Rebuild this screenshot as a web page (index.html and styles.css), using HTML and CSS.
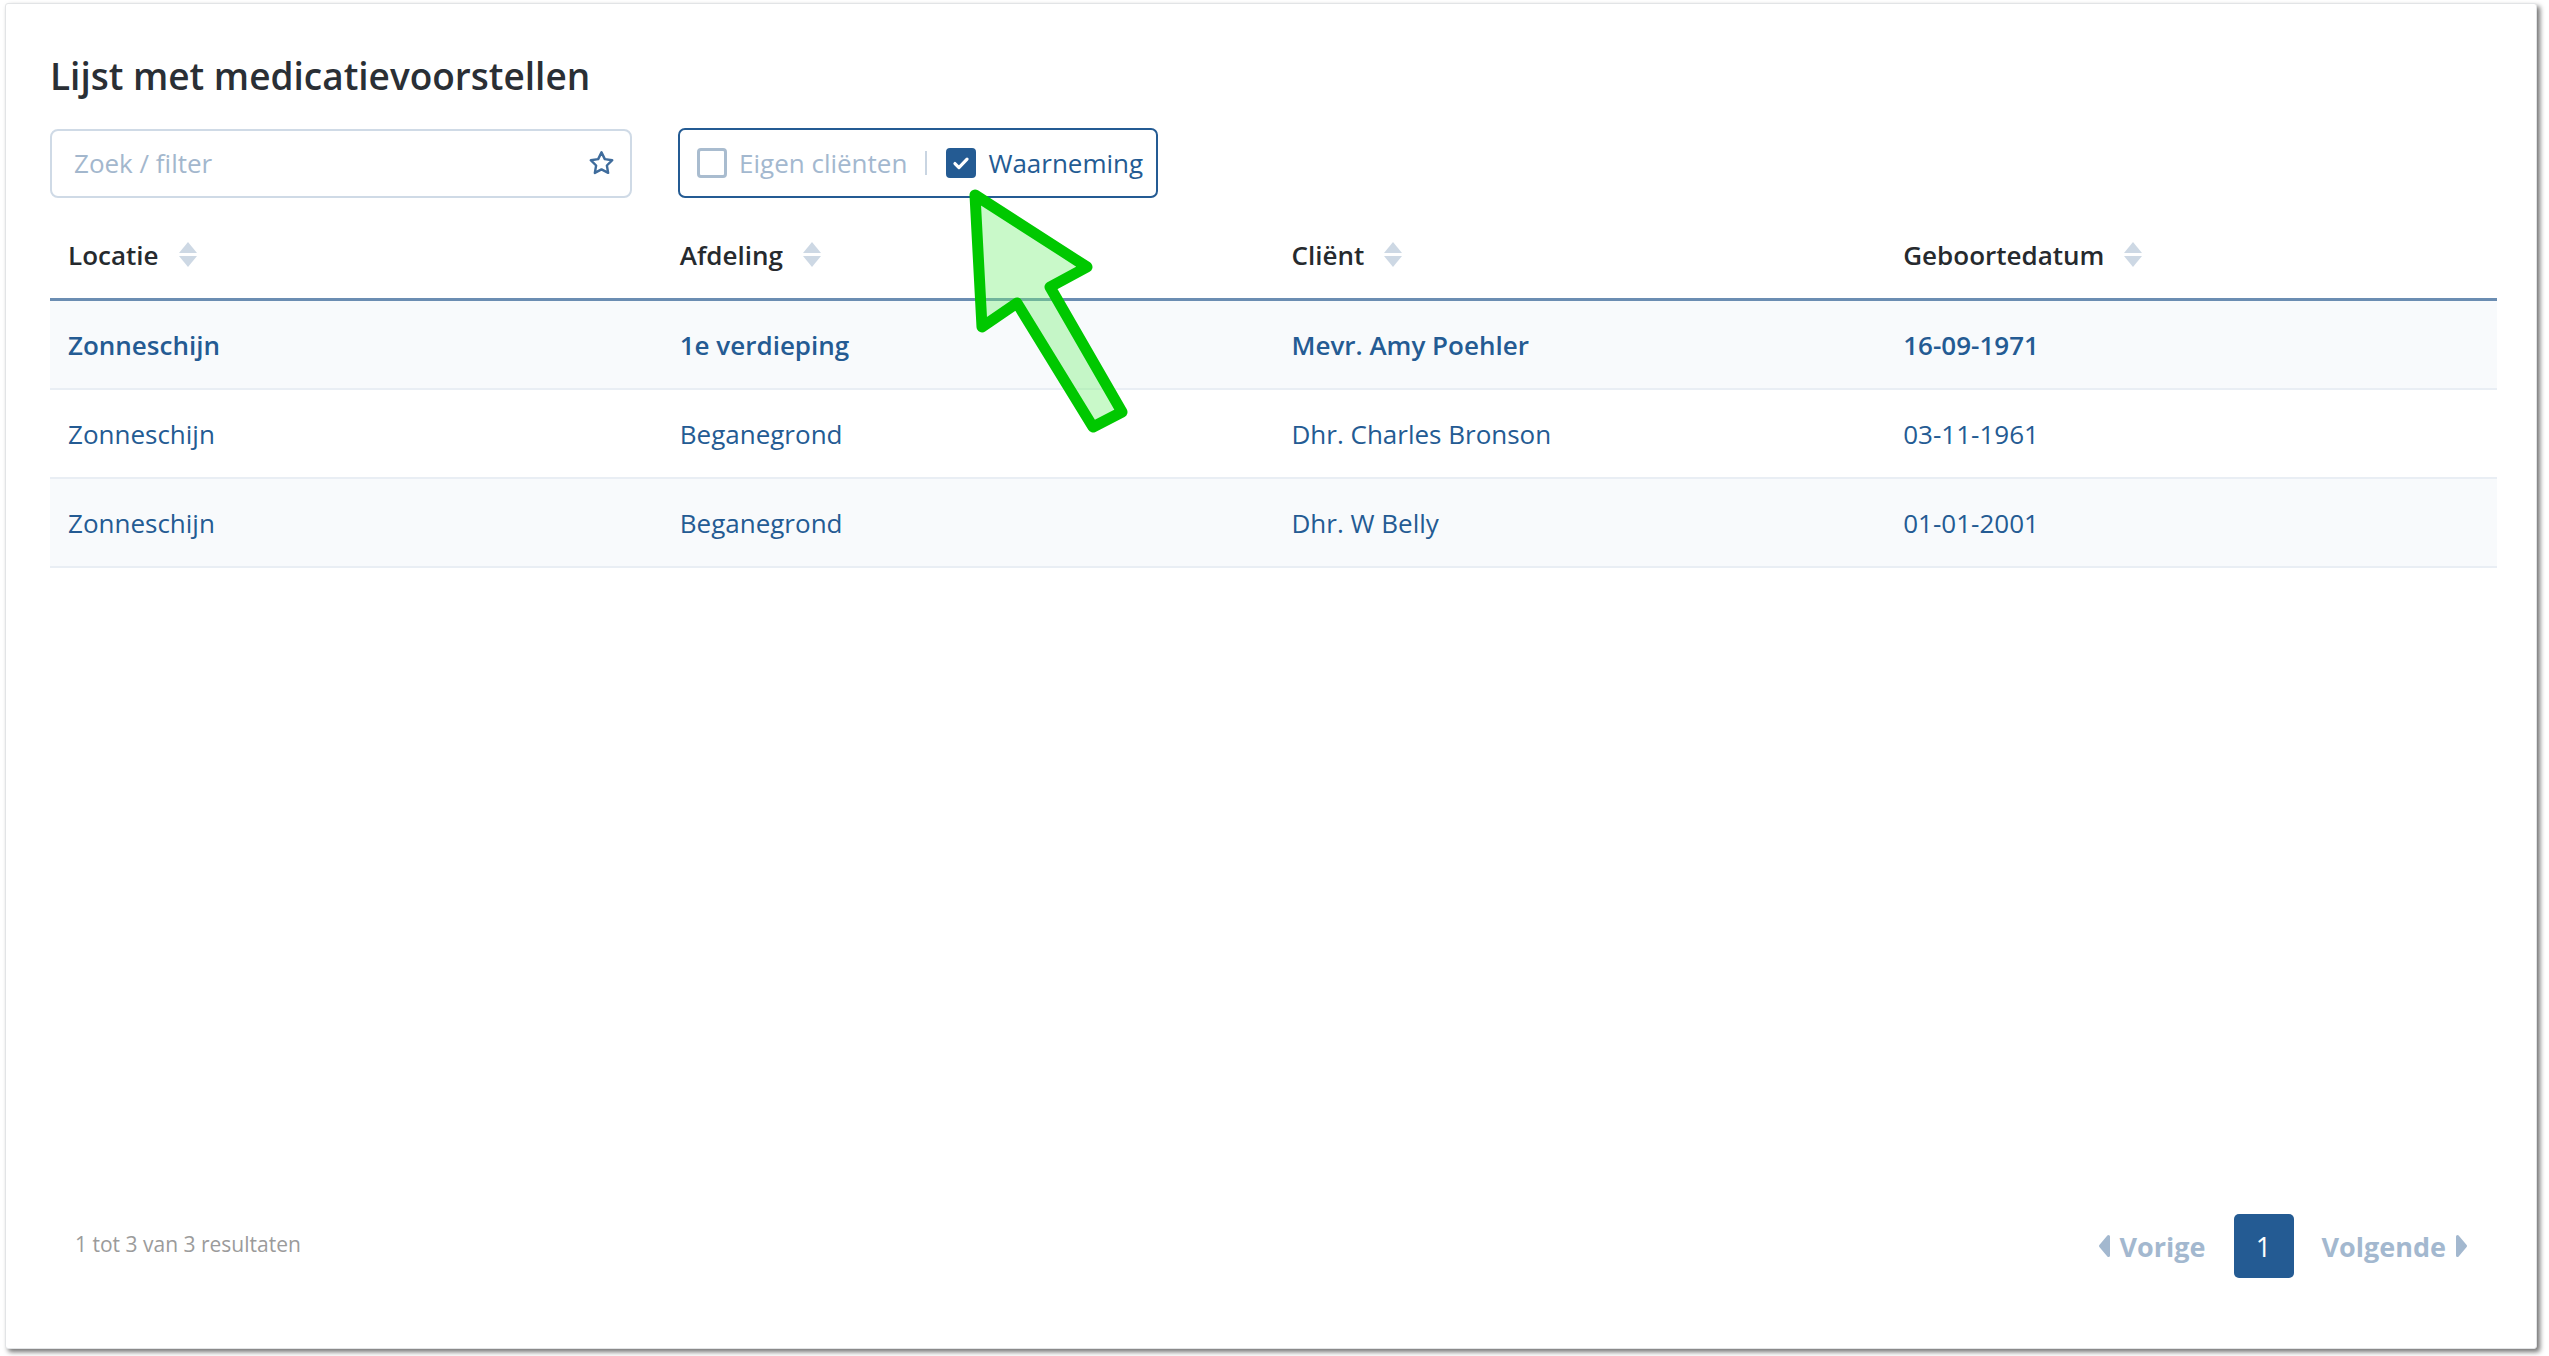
FILE: index.html
```html
<!DOCTYPE html>
<html>

<head>
  <meta charset="utf-8">
  <meta name="viewport" content="width=device-width">
  <title>Lijst met medicatievoorstellen</title>

  <link rel="stylesheet" href="styles.css">
</head>

<body>
  <div class="window">

    <h1 class="title">Lijst met medicatievoorstellen</h1>

    <div class="toolbar">
      <label class="search">
        <input class="search__field" type="text" placeholder="Zoek / filter">
        <svg class="search__star" viewBox="0 0 24 24" width="29" height="29">
          <path d="M12 2.8l2.75 5.6 6.15.9-4.45 4.35 1.05 6.1L12 16.85l-5.5 2.9 1.05-6.1L3.1 9.3l6.15-.9z"
            fill="none" stroke="#3f6c9c" stroke-width="2" stroke-linejoin="round" />
        </svg>
      </label>

      <div class="filters">
        <label class="check">
          <span class="check__box"></span>
          <span class="check__text">Eigen cliënten</span>
        </label>
        <span class="filters__sep"></span>
        <label class="check check--on">
          <span class="check__box">
            <svg viewBox="0 0 16 16" width="22" height="22">
              <path d="M3.6 8.4l2.9 2.9 5.9-6.1" fill="none" stroke="#fff" stroke-width="2.3"
                stroke-linecap="round" stroke-linejoin="round" />
            </svg>
          </span>
          <span class="check__text">Waarneming</span>
        </label>
      </div>
    </div>

    <table class="grid">
      <thead>
        <tr>
          <th><span class="sort">Locatie <span class="sort__icon"><i class="sort__up"></i><i class="sort__down"></i></span></span></th>
          <th><span class="sort">Afdeling <span class="sort__icon"><i class="sort__up"></i><i class="sort__down"></i></span></span></th>
          <th><span class="sort">Cliënt <span class="sort__icon"><i class="sort__up"></i><i class="sort__down"></i></span></span></th>
          <th><span class="sort">Geboortedatum <span class="sort__icon"><i class="sort__up"></i><i class="sort__down"></i></span></span></th>
        </tr>
      </thead>
      <tbody>
        <tr class="grid__row grid__row--active">
          <td>Zonneschijn</td>
          <td>1e verdieping</td>
          <td>Mevr. Amy Poehler</td>
          <td>16-09-1971</td>
        </tr>
        <tr class="grid__row">
          <td>Zonneschijn</td>
          <td>Beganegrond</td>
          <td>Dhr. Charles Bronson</td>
          <td>03-11-1961</td>
        </tr>
        <tr class="grid__row grid__row--alt">
          <td>Zonneschijn</td>
          <td>Beganegrond</td>
          <td>Dhr. W Belly</td>
          <td>01-01-2001</td>
        </tr>
      </tbody>
    </table>

    <div class="spacer"></div>

    <div class="footer">
      <span class="footer__count">1 tot 3 van 3 resultaten</span>
      <nav class="pager">
        <span class="pager__link">
          <svg viewBox="0 0 13 24" width="13" height="24"><path d="M10.5 2.5L2.5 12l8 9.5z" fill="#a3b8cf" stroke="#a3b8cf" stroke-width="3" stroke-linejoin="round" /></svg>
          Vorige
        </span>
        <span class="pager__page">1</span>
        <span class="pager__link">
          Volgende
          <svg viewBox="0 0 13 24" width="13" height="24"><path d="M2.5 2.5l8 9.5-8 9.5z" fill="#a3b8cf" stroke="#a3b8cf" stroke-width="3" stroke-linejoin="round" /></svg>
        </span>
      </nav>
    </div>

  </div>

  <!-- annotation arrow -->
  <svg class="pointer" viewBox="0 0 180 260" width="180" height="260">
    <path d="M15 15 L22 147 L57 123 L133 247 L162 232 L90 107 L127 87 Z"
      fill="rgba(120,240,120,0.4)" stroke="#00c800" stroke-width="11" stroke-linejoin="round" />
  </svg>
</body>

</html>
```

FILE: styles.css
```css
:root {
  --color-primary: #245b93;
  --color-muted: #a3b8cf;
  --color-text: #2a2f35;
  --color-line: #e9eef4;
  --font-main: 'Open Sans', 'Noto Sans', Arial, sans-serif;
}

html,
body {
  height: 100%;
}

body {
  margin: 0;
  background-color: #fff;
  font-family: var(--font-main);
  color: var(--color-text);
}

.window {
  box-sizing: border-box;
  display: flex;
  flex-direction: column;
  height: calc(100vh - 10px);
  margin: 3px 12px 7px 5px;
  padding: 48px 39px 0 44px;
  border: 1px solid #e2e4e6;
  border-radius: 3px;
  background-color: #fff;
  box-shadow: 3px 3px 5px rgba(0, 0, 0, 0.55);
}

.title {
  margin: 0 0 28px;
  font-size: 37px;
  line-height: 48px;
  font-weight: 600;
  color: var(--color-text);
}

.toolbar {
  display: flex;
  align-items: center;
  gap: 46px;
  margin-bottom: 13px;
}

.search {
  box-sizing: border-box;
  display: flex;
  align-items: center;
  width: 582px;
  height: 69px;
  padding: 0 14px 0 22px;
  border: 2px solid #cfdae6;
  border-radius: 8px;
}

.search__field {
  flex: 1;
  min-width: 0;
  border: none;
  outline: none;
  padding: 0;
  font: inherit;
  font-size: 26px;
  color: var(--color-text);
  background: transparent;
}

.search__field::placeholder {
  color: #a3b7cd;
}

.search__star {
  flex: none;
}

.filters {
  box-sizing: border-box;
  display: flex;
  align-items: center;
  height: 70px;
  padding: 0 13px 0 17px;
  border: 2px solid var(--color-primary);
  border-radius: 7px;
}

.filters__sep {
  width: 2px;
  height: 24px;
  margin: 0 19px 0 18px;
  background-color: #c9d5e2;
}

.check {
  display: flex;
  align-items: center;
  gap: 12px;
  font-size: 26px;
  color: var(--color-muted);
}

.check__box {
  box-sizing: border-box;
  display: flex;
  align-items: center;
  justify-content: center;
  width: 30px;
  height: 30px;
  border: 3px solid #a9bccf;
  border-radius: 4px;
}

.check--on {
  color: var(--color-primary);
}

.check--on .check__box {
  border-color: var(--color-primary);
  background-color: var(--color-primary);
}

.grid {
  width: 100%;
  border-collapse: collapse;
  table-layout: fixed;
  font-size: 26px;
}

.grid th {
  height: 87px;
  padding: 0 18px;
  text-align: left;
  font-weight: 600;
  color: #262a2e;
  border-bottom: 3px solid #6b8db2;
}

.sort {
  display: inline-flex;
  align-items: center;
  gap: 20px;
}

.sort__icon {
  display: flex;
  flex-direction: column;
  gap: 3px;
}

.sort__up,
.sort__down {
  display: block;
  width: 0;
  height: 0;
  border-left: 9px solid transparent;
  border-right: 9px solid transparent;
}

.sort__up {
  border-bottom: 11px solid #cdd8e4;
}

.sort__down {
  border-top: 11px solid #cdd8e4;
}

.grid td {
  height: 87px;
  padding: 0 18px;
  color: var(--color-primary);
  border-bottom: 2px solid var(--color-line);
}

.grid__row--active td,
.grid__row--alt td {
  background-color: #f8fafc;
}

.grid__row--active td {
  font-weight: 600;
}

.spacer {
  flex: 1;
}

.footer {
  display: flex;
  align-items: center;
  justify-content: space-between;
  padding: 0 29px 70px 25px;
}

.footer__count {
  margin-bottom: 4px;
  font-size: 21px;
  color: #9b9b9b;
}

.pager {
  display: flex;
  align-items: center;
  gap: 28px;
}

.pager__link {
  display: flex;
  align-items: center;
  gap: 9px;
  font-size: 27px;
  font-weight: 700;
  color: var(--color-muted);
}

.pager__page {
  display: flex;
  align-items: center;
  justify-content: center;
  width: 60px;
  height: 64px;
  border-radius: 5px;
  background-color: var(--color-primary);
  font-size: 27px;
  color: #fff;
}

.pointer {
  position: absolute;
  left: 960px;
  top: 180px;
  pointer-events: none;
}
```
